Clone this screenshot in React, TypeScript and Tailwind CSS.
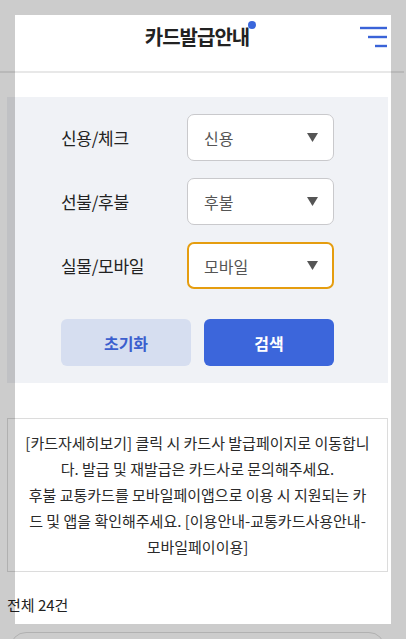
import React from 'react';

const Caret: React.FC = () => (
  <svg width="11" height="9" viewBox="0 0 11 9" className="shrink-0">
    <path d="M0 0 H11 L5.5 9 Z" fill="#555" />
  </svg>
);

const MenuIcon: React.FC = () => (
  <svg width="28" height="22" viewBox="0 0 28 22" fill="none" stroke="#3a63d8" strokeWidth="2.4">
    <path d="M0 2 H27" />
    <path d="M8 11 H27" />
    <path d="M15 20 H27" />
  </svg>
);

const rows = [
  { label: '신용/체크', value: '신용', active: false },
  { label: '선불/후불', value: '후불', active: false },
  { label: '실물/모바일', value: '모바일', active: true },
];

const App: React.FC = () => {
  return (
    <div className="relative w-[406px] h-[639px] overflow-hidden bg-white font-['Noto_Sans_CJK_KR',sans-serif]">
      <header className="grid grid-cols-[1fr_auto_1fr] items-center h-[73px] pr-[10px] pt-[3px] border-b-2 border-[#e8e8e8] w-[404px]">
        <div />
        <h1 className="relative text-[20px] font-bold tracking-[-1px] text-[#222]">
          카드발급안내
          <span className="absolute -right-[7px] top-[-1px] w-2 h-2 rounded-full bg-[#3a66db]" />
        </h1>
        <div className="flex justify-end pr-[6px]">
          <MenuIcon />
        </div>
      </header>

      <main className="ml-[7px] w-[381px] mt-[24px]">
        <section className="bg-[#f0f2f6] px-[54px] py-[17px]">
          <div className="flex flex-col gap-[17px]">
            {rows.map((r) => (
              <div key={r.label} className="flex items-center">
                <span className="w-[126px] text-[17px] text-[#222] tracking-[-0.3px]">{r.label}</span>
                <div
                  className={
                    r.active
                      ? 'flex items-center justify-between w-[147px] h-[47px] rounded-[7px] bg-white border-2 border-[#e59d0f] pl-[15px] pr-[14px]'
                      : 'flex items-center justify-between w-[147px] h-[47px] rounded-[7px] bg-white border border-[#c9c9cc] pl-[16px] pr-[15px]'
                  }
                >
                  <span className="text-[16px] text-[#555]">{r.value}</span>
                  <Caret />
                </div>
              </div>
            ))}
          </div>
          <div className="flex gap-[13px] mt-[30px]">
            <button type="button" className="w-[130px] h-[47px] rounded-[6px] bg-[#d6def0] text-[16px] font-bold text-[#3b5fce]">
              초기화
            </button>
            <button type="button" className="w-[130px] h-[47px] rounded-[6px] bg-[#3c66db] text-[16px] font-bold text-white">
              검색
            </button>
          </div>
        </section>

        <div className="mt-[35px] border border-[#dcdcdc] bg-white px-[15px] py-[11px] text-center text-[15px] leading-[26px] text-[#2a2a2a]">
          [카드자세히보기] 클릭 시 카드사 발급페이지로 이동합니다. 발급 및 재발급은 카드사로 문의해주세요.
          <br />
          후불 교통카드를 모바일페이앱으로 이용 시 지원되는 카드 및 앱을 확인해주세요. [이용안내-교통카드사용안내-모바일페이이용]
        </div>

        <p className="mt-[22px] text-[15px] leading-[22px] text-[#222]">전체 24건</p>
      </main>

      <div className="ml-[10px] mt-[16px] w-[375px] h-[80px] rounded-[16px] border border-[#dedede] bg-white" />

      <div className="pointer-events-none absolute left-[15px] top-[15px] w-[376px] h-[609px] shadow-[0_0_0_2000px_rgba(0,0,0,0.2)]" />
    </div>
  );
};

export default App;
